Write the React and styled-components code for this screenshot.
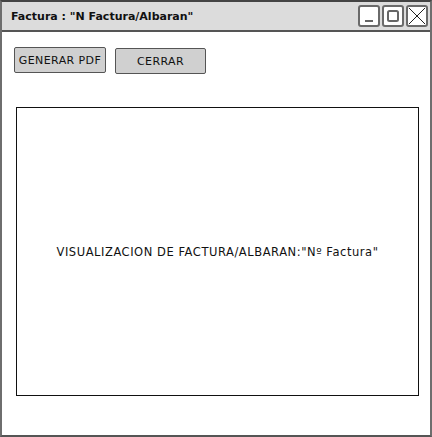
import React from "react";
import styled, { createGlobalStyle } from "styled-components";

const GlobalStyle = createGlobalStyle`
  html, body {
    margin: 0;
    padding: 0;
    background: #ffffff;
  }
  body {
    font-family: "Comic Sans MS", "DejaVu Sans", sans-serif;
  }
`;

const Window = styled.div`
  box-sizing: border-box;
  width: 432px;
  height: 437px;
  border: 2px solid #6e6e6e;
  border-top-color: #444;
  border-bottom-color: #555;
  display: flex;
  flex-direction: column;
  background: #fff;
`;

const TitleBar = styled.div`
  box-sizing: border-box;
  height: 30px;
  background: #dcdcdc;
  border-bottom: 2px solid #555;
  display: flex;
  align-items: center;
  justify-content: space-between;
  padding: 0 2px 0 9px;
`;

const Title = styled.div`
  font-size: 11px;
  font-weight: bold;
  color: #111;
`;

const Controls = styled.div`
  display: flex;
  gap: 2px;
`;

const ControlButton = styled.div`
  box-sizing: border-box;
  width: 22px;
  height: 22px;
  border: 2px solid #6a6a6a;
  border-radius: 3px;
  background: #fff;
  display: flex;
  align-items: center;
  justify-content: center;
  svg {
    display: block;
  }
`;

const Body = styled.div`
  flex: 1;
  display: flex;
  flex-direction: column;
  padding: 15px 11px 0 12px;
`;

const ButtonRow = styled.div`
  display: flex;
  gap: 9px;
`;

const Button = styled.div`
  box-sizing: border-box;
  width: ${(p) => p.width}px;
  height: 26px;
  margin-top: ${(p) => p.offset || 0}px;
  background: #d0d0d0;
  border: 1px solid #555;
  border-radius: 2px;
  display: flex;
  align-items: center;
  justify-content: center;
  font-size: 11px;
  letter-spacing: 0.4px;
  color: #111;
`;

const Viewer = styled.div`
  box-sizing: border-box;
  margin: 33px 0 0 2px;
  width: 403px;
  height: 289px;
  border: 1.5px solid #111;
  display: flex;
  align-items: center;
  justify-content: center;
  font-size: 11.5px;
  letter-spacing: 0.55px;
  color: #111;
`;

const App = () => {
  return (
    <>
      <GlobalStyle />
      <Window>
        <TitleBar>
          <Title>Factura : "N Factura/Albaran"</Title>
          <Controls>
            <ControlButton>
              <svg width="14" height="14" viewBox="0 0 14 14">
                <line x1="3" y1="12" x2="11" y2="12" stroke="#666" strokeWidth="2" />
              </svg>
            </ControlButton>
            <ControlButton>
              <svg width="14" height="14" viewBox="0 0 14 14">
                <rect x="2" y="2" width="10" height="10" rx="1.5" fill="none" stroke="#666" strokeWidth="2" />
              </svg>
            </ControlButton>
            <ControlButton>
              <svg width="18" height="18" viewBox="0 0 18 18">
                <path d="M1 1 L17 17 M17 1 L1 17" stroke="#222" strokeWidth="1" />
              </svg>
            </ControlButton>
          </Controls>
        </TitleBar>
        <Body>
          <ButtonRow>
            <Button width={92}>GENERAR PDF</Button>
            <Button width={91} offset={1}>CERRAR</Button>
          </ButtonRow>
          <Viewer>VISUALIZACION DE FACTURA/ALBARAN:"Nº Factura"</Viewer>
        </Body>
      </Window>
    </>
  );
};

export default App;
